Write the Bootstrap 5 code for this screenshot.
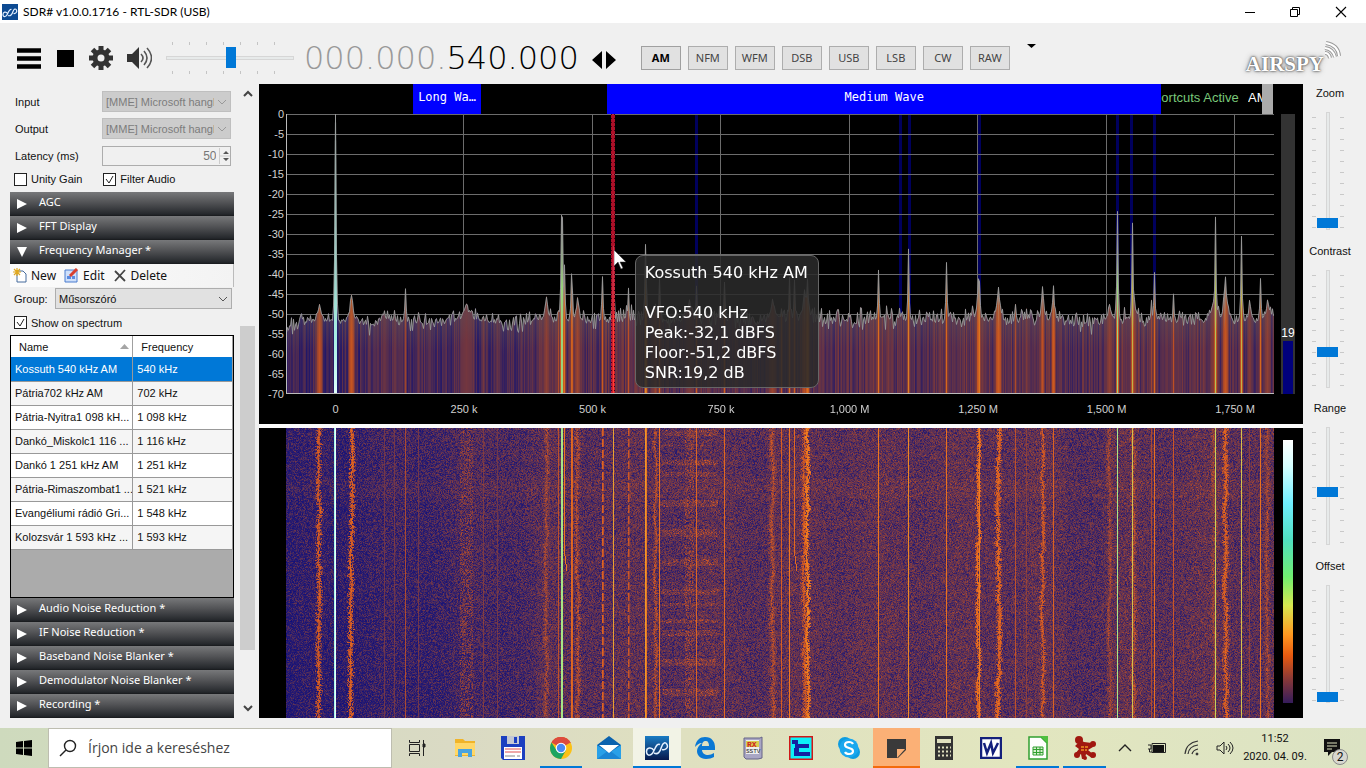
<!DOCTYPE html>
<html lang="hu">
<head>
<meta charset="utf-8">
<meta name="viewport" content="width=device-width, initial-scale=1">
<title>SDR# v1.0.0.1716 - RTL-SDR (USB)</title>
<link href="https://cdn.jsdelivr.net/npm/bootstrap@5.3.0/dist/css/bootstrap.min.css" rel="stylesheet">
<script src="https://cdn.jsdelivr.net/npm/bootstrap@5.3.0/dist/js/bootstrap.bundle.min.js"></script>
<style>
  body { font: 11px/16px "Noto Sans", "Open Sans", sans-serif; color: #111; background: #f0f0f0; height: 100vh; min-height: 640px; overflow: hidden; }
  svg { display: block; }
  button { font: inherit; color: inherit; }
  .plain-btn { border: 0; background: none; padding: 0; }
  .ui-text { font-family: "Liberation Sans", sans-serif; font-size: 11px; }

  .title-bar { height: 23px; background: #fff; padding: 0 18px 0 2px; }
  .title-text { font: 12px/16px Lato, sans-serif; color: #000; margin-left: 5px; }
  .window-btns { gap: 33px; }
  .tool-row { height: 61px; padding: 8px 24px 0 15px; }
  .tools { gap: 14px; }

  .volume { width: 128px; height: 32px; background: repeating-linear-gradient(90deg, #c4c4c4 0 1px, transparent 1px 17px) 6px 0 / 118px 3px no-repeat, repeating-linear-gradient(90deg, #c4c4c4 0 1px, transparent 1px 17px) 6px 100% / 118px 3px no-repeat; }
  .slider { appearance: none; -webkit-appearance: none; background: none; margin: 0; display: block; }
  .slider::-webkit-slider-runnable-track { height: 4px; background: #e7eaea; border: 1px solid #d6d6d6; }
  .slider::-webkit-slider-thumb { -webkit-appearance: none; width: 10px; height: 21px; margin-top: -10px; background: #0078d7; border: 0; border-radius: 0; }

  .digits { font: 200 32px/40px "DejaVu Sans Light", "DejaVu Sans", sans-serif; color: #000; white-space: nowrap; margin-left: 10px; }
  .digits .dim { color: #999; }
  .modes { gap: 7px; }
  .mode { width: 40px; height: 24px; padding: 0; border: 1px solid #adadad; border-radius: 0; background: #e1e1e1; color: #444; font: 11px/16px "Noto Sans", sans-serif; }
  .mode.active { color: #000; font-weight: 700; border-color: #a0a0a0; background: #e1e1e1; }
  .brand { font: 900 21px/24px "Liberation Serif", serif; color: #fff; text-shadow: 0 0 2px #444, 0 0 3px #777, 0 0 6px #999; }

  .left-pane { width: 259px; flex: none; }
  .left-content { width: 234px; padding-left: 10px; }
  .field-row { height: 27px; padding: 0 3px 0 5px; }
  .drop { appearance: none; border: 1px solid #adadad; border-radius: 0; height: 21px; padding: 0 16px 0 3px; color: #111; font: 11px/16px "Liberation Sans", sans-serif; background: #e1e1e1 url("data:image/svg+xml,%3Csvg xmlns='http://www.w3.org/2000/svg' width='10' height='6'%3E%3Cpath d='M1 1l4 4 4-4' fill='none' stroke='%23555'/%3E%3C/svg%3E") right 3px center no-repeat; }
  .drop:disabled { width: 129px; background-color: #ccc; border-color: #bfbfbf; color: #7c7c7c; opacity: 1; background-image: url("data:image/svg+xml,%3Csvg xmlns='http://www.w3.org/2000/svg' width='10' height='6'%3E%3Cpath d='M1 1l4 4 4-4' fill='none' stroke='%23999'/%3E%3C/svg%3E"); }
  .group-drop { width: 177px; margin-right: 2px; }
  .num-box { width: 129px; height: 20px; border: 1px solid #adadad; }
  .num-box input { min-width: 0; border: 0; background: none; text-align: right; color: #777; font: 12px/16px "Liberation Sans", sans-serif; padding: 0 2px; }
  .check-row { height: 23px; padding-bottom: 3px; }
  .tick { appearance: none; width: 13px; height: 13px; margin: 0; border: 1px solid #222; background: #fff; flex: none; }
  .tick:checked { background: #fff url("data:image/svg+xml,%3Csvg xmlns='http://www.w3.org/2000/svg' width='11' height='11'%3E%3Cpath d='M2 5l3 4 4-7' fill='none' stroke='%23222'/%3E%3C/svg%3E") center no-repeat; }
  .fold { height: 24px; width: 100%; border: 0; padding: 0 0 4px 7px; gap: 12px; color: #fff; font: 11px/16px "Noto Sans", sans-serif; background: linear-gradient(#77787a, #515255 45%, #25282c 92%, #17191c); text-align: left; }
  .fold svg { margin-top: 4px; }
  .fold-text { white-space: nowrap; }
  .freq-tools { height: 23px; background: linear-gradient(90deg, #fcfcfc, #f3f3f3); gap: 8px; border-right: 1px solid #bbb; padding-left: 3px; font-size: 12px; }
  .grid-box { border: 1px solid #000; background: #ababab; min-height: 0; overflow: hidden; }
  .grid-table { table-layout: fixed; width: 100%; font: 11px/16px "Liberation Sans", sans-serif; color: #111; border-collapse: collapse; background: #fff; margin: 0; }
  .name-col { width: 55%; }
  .grid-table th { height: 21px; font-weight: 400; padding: 0 3px 0 8px; border: solid #a0a0a0; border-width: 0 1px 0 0; }
  .grid-table td { height: 24px; padding: 0 0 0 4px; border: 1px solid #999; border-width: 0 1px 1px 0; white-space: nowrap; overflow: hidden; }
  .grid-table tr:nth-child(even) td { background: #f5f5f5; }
  .grid-table tr.picked td { background: #0078d7; color: #fff; }
  .pane-scroll { width: 15px; margin-left: 6px; }
  .pane-thumb { height: 324px; background: #cdcdcd; margin-bottom: 54px; }

  .spectrum { flex: 340 1 0; background: #000; display: grid; grid-template: 30px 1fr 30px / 27px 1fr 29px; min-height: 0; }
  .waterfall { flex: 290 1 0; background: #000; display: grid; grid-template-columns: 27px 1fr 29px; min-height: 0; }
  .spectrum canvas, .waterfall canvas { width: 100%; height: 100%; display: block; }
  .view-gap { height: 4px; background: #fafafa; }
  .band { background: #00f; color: #fff; font: 12px/27px "DejaVu Sans Mono", monospace; text-align: center; white-space: nowrap; overflow: hidden; flex: none; }
  .marquee-text { font: 13px/28px "Liberation Sans", sans-serif; color: #fff; white-space: nowrap; overflow: hidden; }
  .marquee-text .good { color: #79c879; }
  .marquee-clip { width: 14px; overflow: hidden; }
  .marquee-cap { width: 11px; background: #ababab; flex: none; margin-right: 1px; }
  .axis { font: 11px/14px "Liberation Sans", sans-serif; color: #d0d0d0; }
  .axis-y { margin: -7px 2px -7px 0; text-align: right; z-index: 1; }
  .axis-x span { position: absolute; top: 8px; transform: translateX(-50%); white-space: nowrap; }
  .meter { width: 14px; margin-left: 7px; background: #333; color: #fff; font: 12px/16px "Liberation Sans", sans-serif; }
  .meter-bar { width: 10px; height: 19%; background: #00007c; }
  .hint { position: absolute; left: 35.3%; top: 50.2%; width: 184px; height: 133px; padding: 7px 9px; border: 1px solid #666; border-radius: 8px; background: rgba(42,42,42,.87); color: #fff; font: 16px/20px "DejaVu Sans", sans-serif; white-space: nowrap; }
  .pointer { position: absolute; left: 33.2%; top: 48.5%; }
  .scale-bar { width: 10px; margin: 12px 0 15px 9px; background: linear-gradient(#fff, #d5ffff 10%, #70efff 24%, #50dfc0 38%, #70ef70 52%, #d8e850 63%, #ff9820 74%, #e85a10 82%, #883838 91%, #351c5c); }

  .right-pane { width: 63px; padding: 0 9px 4px 0; flex: none; }
  .side-ctl { flex: 1 1 0; min-height: 0; }
  .side-label { height: 28px; padding-top: 1px; white-space: nowrap; }
  .side-slider { width: 32px; height: 118px; margin-right: 4px; background: repeating-linear-gradient(#c9c9c9 0 1px, transparent 1px 11px) 0 5px / 4px 111px no-repeat, repeating-linear-gradient(#c9c9c9 0 1px, transparent 1px 11px) 100% 5px / 4px 111px no-repeat; }
  .side-slider .slider { width: 118px; height: 24px; flex: none; transform: rotate(-90deg); }

  .task-bar { height: 40px; margin-top: 10px; background: linear-gradient(90deg, #cedabd, #dadac4 33%, #dfe0c0 50%, #e2e6bf 75%, #dce3c4); }
  .start { width: 48px; }
  .search { width: 344px; margin-right: 1px; background: #fff; border: 1px solid #bdbdb0; padding-left: 10px; gap: 11px; }
  .search input { border: 0; outline: 0; min-width: 0; font: 14px/20px "Open Sans", sans-serif; color: #444; padding: 0; }
  .search input::placeholder { color: #444; opacity: 1; }
  .task { width: 48px; border-bottom: 2px solid transparent; padding-top: 2px; flex: none; }
  .task.slim { width: 47px; }
  .task.on { border-image: linear-gradient(90deg, transparent 9%, #0078d7 9% 91%, transparent 91%) 2; border-width: 0 0 2px; }
  .task.front { background: #f2f3e6; border-color: #0078d7; }
  .task.alert-on { background: #fbb076; border-color: #f36a0c; }
  .clock { width: 66px; text-align: center; font: 11px/18px Roboto, sans-serif; color: #111; }
  .count { position: absolute; left: 8px; top: 10px; width: 16px; height: 16px; border-radius: 50%; background: #d8d8d0; border: 1px solid #888; font: 12px/14px Roboto, sans-serif; text-align: center; }
</style>
</head>
<body class="d-flex flex-column">

<header class="title-bar d-flex align-items-center">
  <svg width="16" height="16" viewBox="0 0 16 16"><rect width="16" height="16" fill="#0d4a92"/><path d="M1 10.500c0 3 3 3 4.500-.5S8 5 9.500 5.500M6 11.500c2.500 1 4-1 5-4s2.500-3 3.500-1.500c1 2-1 4-3 3.500M1 10.500c0-2.500 3-3.500 4.500-1" fill="none" stroke="#e4f0ff" stroke-width="1.200"/></svg>
  <span class="title-text me-auto">SDR# v1.0.0.1716 - RTL-SDR (USB)</span>
  <div class="window-btns d-flex align-items-center">
    <button class="plain-btn" aria-label="Minimize"><svg width="12" height="12"><path d="M1 6.500h10" stroke="#000"/></svg></button>
    <button class="plain-btn" aria-label="Restore"><svg width="12" height="12" fill="none" stroke="#000"><path d="M1.500 3.500h7v7h-7zM3.500 3.500v-2h7v7h-2"/></svg></button>
    <button class="plain-btn" aria-label="Close"><svg width="14" height="14"><path d="M2 2l10 10M12 2L2 12" stroke="#000" stroke-width="1.100"/></svg></button>
  </div>
</header>

<div class="tool-row d-flex align-items-center">
  <div class="tools d-flex align-items-center">
    <button class="plain-btn" aria-label="Menu"><svg width="27" height="22"><path d="M2 3.500h24M2 11.500h24M2 19.500h24" stroke="#000" stroke-width="4.500"/></svg></button>
    <button class="plain-btn" aria-label="Stop"><svg width="19" height="18"><rect x="1" y="1" width="17" height="17"/></svg></button>
    <button class="plain-btn" aria-label="Settings"><svg width="24" height="24" viewBox="-12 -12 24 24"><g fill="#333"><path d="M-2.500-12h5v24h-5z"/><path d="M-2.500-12h5v24h-5z" transform="rotate(45)"/><path d="M-2.500-12h5v24h-5z" transform="rotate(90)"/><path d="M-2.500-12h5v24h-5z" transform="rotate(135)"/><circle r="8.500"/></g><circle r="3.500" fill="#f0f0f0"/></svg></button>
    <button class="plain-btn" aria-label="Mute"><svg width="25" height="24" viewBox="1 0 25 24"><path d="M0 8h6l7-7v22l-7-7H0z" fill="#333"/><path d="M15 8q4 4 0 8M18 5q6 7 0 14M21 2q9 10 0 20" fill="none" stroke="#555" stroke-width="1.600"/></svg></button>
    <div class="volume d-flex align-items-center"><input type="range" class="slider w-100" value="51" aria-label="Volume"></div>
  </div>
  <div class="digits"><span class="dim">000.000.</span>540.000</div>
  <button class="plain-btn ms-2 ps-1 mt-1" aria-label="Tuning style"><svg width="26" height="18"><path d="M11 0v18L1 9zM15 0v18l10-9z"/></svg></button>
  <div class="modes d-flex ms-4">
    <button class="mode active">AM</button><button class="mode">NFM</button><button class="mode">WFM</button><button class="mode">DSB</button><button class="mode">USB</button><button class="mode">LSB</button><button class="mode">CW</button><button class="mode">RAW</button>
  </div>
  <button class="plain-btn ms-3 mb-4" aria-label="More"><svg width="12" height="6"><path d="M1 1h9L5.500 5z"/></svg></button>
  <div class="brand ms-auto d-flex align-items-end"><span>AIRSPY</span><svg class="mb-3" width="18" height="20" viewBox="0 0 18 20" fill="none"><g stroke="#999" stroke-width="4"><path d="M1 13q4 0 5 5M1 8q8 1 10 9M2 3q12 2 13 13"/></g><g stroke="#fff" stroke-width="2"><path d="M1 13q4 0 5 5M1 8q8 1 10 9M2 3q12 2 13 13"/></g></svg></div>
</div>

<main class="d-flex flex-grow-1" style="min-height:0">
  <aside class="left-pane d-flex">
    <div class="left-content d-flex flex-column pt-1">
      <div class="field-row d-flex align-items-center justify-content-between ui-text"><label for="inp">Input</label><select id="inp" class="drop" disabled><option>[MME] Microsoft hangl</option></select></div>
      <div class="field-row d-flex align-items-center justify-content-between ui-text"><label for="outp">Output</label><select id="outp" class="drop" disabled><option>[MME] Microsoft hangl</option></select></div>
      <div class="field-row d-flex align-items-center justify-content-between ui-text"><label for="lat">Latency (ms)</label>
        <div class="num-box d-flex align-items-center"><input id="lat" class="flex-grow-1" value="50" disabled><svg width="16" height="18"><path d="M1.500 1v16M1 9h14" stroke="#ccc"/><path d="M5 7l3-3 3 3zM5 11l3 3 3-3z" fill="#555"/></svg></div></div>
      <div class="check-row d-flex align-items-center ui-text"><div class="d-flex align-items-center gap-1 col-5 ps-1"><input type="checkbox" class="tick" id="ug"><label for="ug">Unity Gain</label></div><div class="d-flex align-items-center gap-1"><input type="checkbox" class="tick" id="fa" checked><label for="fa">Filter Audio</label></div></div>
      <button class="fold d-flex align-items-center"><svg width="10" height="10"><path d="M0 0v10l10-5z" fill="#fff"/></svg><span class="fold-text">AGC</span></button>
      <button class="fold d-flex align-items-center"><svg width="10" height="10"><path d="M0 0v10l10-5z" fill="#fff"/></svg><span class="fold-text">FFT Display</span></button>
      <button class="fold d-flex align-items-center"><svg width="10" height="10"><path d="M0 0h10L5 10z" fill="#fff"/></svg><span class="fold-text">Frequency Manager *</span></button>
      <div class="freq-tools d-flex align-items-center">
        <button class="plain-btn d-flex align-items-center gap-1"><svg width="14" height="15" viewBox="0 0 14 15"><path d="M4 3h6l3 3v8H4z" fill="#fff" stroke="#456a9c"/><path d="M4 0v8M0 4h8M1 1l6 6M7 1L1 7" stroke="#e0a820" stroke-width="1.200"/></svg>New</button>
        <button class="plain-btn d-flex align-items-center gap-1"><svg width="15" height="15" viewBox="0 0 15 15"><path d="M1 2h12v12H1z" fill="#cfe0fa" stroke="#4b7ccf"/><path d="M3 8h4v3H3zM8 8h3v3H8z" fill="#5a8ae0"/><path d="M6 8l7-7" stroke="#d84030" stroke-width="3"/></svg>Edit</button>
        <button class="plain-btn d-flex align-items-center gap-1"><svg width="14" height="14"><path d="M2 2l10 10M12 1L2 12" stroke="#444" stroke-width="1.800"/></svg>Delete</button>
      </div>
      <div class="d-flex align-items-center ui-text ps-1" style="height:23px"><label for="grp" class="me-auto">Group:</label><select id="grp" class="drop group-drop"><option>Műsorszóró</option></select></div>
      <div class="d-flex align-items-center gap-1 ui-text ps-1" style="height:25px"><input type="checkbox" class="tick" id="sos" checked><label for="sos">Show on spectrum</label></div>
      <div class="grid-box flex-grow-1">
        <table class="grid-table">
          <colgroup><col class="name-col"><col></colgroup>
          <thead><tr><th><span class="d-flex justify-content-between align-items-center">Name<svg width="9" height="6"><path d="M0 5h9L4.500 0z" fill="#a5a5a5"/></svg></span></th><th>Frequency</th></tr></thead>
          <tbody>
            <tr class="picked"><td>Kossuth 540 kHz AM</td><td>540 kHz</td></tr>
            <tr><td>Pátria702 kHz AM</td><td>702 kHz</td></tr>
            <tr><td>Pátria-Nyitra1 098 kH...</td><td>1 098 kHz</td></tr>
            <tr><td>Dankó_Miskolc1 116 ...</td><td>1 116 kHz</td></tr>
            <tr><td>Dankó 1 251 kHz AM</td><td>1 251 kHz</td></tr>
            <tr><td>Pátria-Rimaszombat1 ...</td><td>1 521 kHz</td></tr>
            <tr><td>Evangéliumi rádió Gri...</td><td>1 548 kHz</td></tr>
            <tr><td>Kolozsvár 1 593 kHz ...</td><td>1 593 kHz</td></tr>
          </tbody>
        </table>
      </div>
      <button class="fold d-flex align-items-center"><svg width="10" height="10"><path d="M0 0v10l10-5z" fill="#fff"/></svg><span class="fold-text">Audio Noise Reduction *</span></button>
      <button class="fold d-flex align-items-center"><svg width="10" height="10"><path d="M0 0v10l10-5z" fill="#fff"/></svg><span class="fold-text">IF Noise Reduction *</span></button>
      <button class="fold d-flex align-items-center"><svg width="10" height="10"><path d="M0 0v10l10-5z" fill="#fff"/></svg><span class="fold-text">Baseband Noise Blanker *</span></button>
      <button class="fold d-flex align-items-center"><svg width="10" height="10"><path d="M0 0v10l10-5z" fill="#fff"/></svg><span class="fold-text">Demodulator Noise Blanker *</span></button>
      <button class="fold d-flex align-items-center"><svg width="10" height="10"><path d="M0 0v10l10-5z" fill="#fff"/></svg><span class="fold-text">Recording *</span></button>
    </div>
    <div class="pane-scroll d-flex flex-column align-items-stretch justify-content-end">
      <svg class="mb-auto mt-1 mx-auto" width="10" height="10"><path d="M1 8l4-4 4 4" fill="none" stroke="#444" stroke-width="2"/></svg>
      <div class="pane-thumb"></div>
      <svg class="mx-auto mb-1" width="10" height="10"><path d="M1 2l4 4 4-4" fill="none" stroke="#444" stroke-width="2"/></svg>
    </div>
  </aside>

  <section class="d-flex flex-column flex-grow-1" style="min-width:0">
    <div class="spectrum">
      <div></div>
      <div class="d-flex" style="min-width:0">
        <div class="band" style="width:6.900%;margin-left:12.850%">Long Wa…</div>
        <div class="band" style="width:56.100%;margin-left:12.750%">Medium Wave</div>
        <div class="marquee-text flex-grow-1 d-flex justify-content-between"><span class="good">ortcuts Active</span><span class="marquee-clip">AM</span></div>
        <div class="marquee-cap"></div>
      </div>
      <div></div>
      <div class="axis axis-y d-flex flex-column justify-content-between" id="levels"></div>
      <div class="position-relative" style="min-height:0">
        <canvas id="fft" width="988" height="280" class="position-absolute"></canvas>
        <div class="hint">Kossuth 540 kHz AM<br><br>VFO:540 kHz<br>Peak:-32,1 dBFS<br>Floor:-51,2 dBFS<br>SNR:19,2 dB</div>
        <svg class="pointer" width="12" height="20" viewBox="0 0 12 20"><path d="M0 0v16l4-4 3 7 2-1-3-6h6z" fill="#fff" stroke="#333" stroke-width=".5"/></svg>
      </div>
      <div class="meter d-flex flex-column align-items-center justify-content-end">19<div class="meter-bar"></div></div>
      <div></div>
      <div class="axis axis-x position-relative" id="freqs"></div>
    </div>
    <div class="view-gap"></div>
    <div class="waterfall">
      <div></div>
      <div class="position-relative"><canvas id="fall" width="988" height="290" class="position-absolute"></canvas></div>
      <div class="scale-bar"></div>
    </div>
  </section>

  <aside class="right-pane d-flex flex-column ui-text">
    <div class="side-ctl d-flex flex-column align-items-center"><label class="side-label" for="s1">Zoom</label><div class="side-slider d-flex justify-content-center align-items-center"><input type="range" id="s1" class="slider" value="1"></div></div>
    <div class="side-ctl d-flex flex-column align-items-center"><label class="side-label" for="s2">Contrast</label><div class="side-slider d-flex justify-content-center align-items-center"><input type="range" id="s2" class="slider" value="28"></div></div>
    <div class="side-ctl d-flex flex-column align-items-center"><label class="side-label" for="s3">Range</label><div class="side-slider d-flex justify-content-center align-items-center"><input type="range" id="s3" class="slider" value="44"></div></div>
    <div class="side-ctl d-flex flex-column align-items-center"><label class="side-label" for="s4">Offset</label><div class="side-slider d-flex justify-content-center align-items-center"><input type="range" id="s4" class="slider" value="0"></div></div>
  </aside>
</main>

<footer class="task-bar d-flex align-items-stretch">
  <button class="plain-btn start d-flex align-items-center justify-content-center" aria-label="Start"><svg width="16" height="16"><path d="M0 2l7-1v6.500H0zM8 1l8-1v7.500H8zM0 8.500h7V15l-7-1zM8 8.500h8V16l-8-1z"/></svg></button>
  <div class="search d-flex align-items-center"><svg width="18" height="18" viewBox="0 0 18 18"><circle cx="11" cy="7" r="5.500" fill="none" stroke="#222" stroke-width="1.400"/><path d="M7 11l-6 6" stroke="#222" stroke-width="1.400"/></svg><input class="flex-grow-1" type="text" placeholder="Írjon ide a kereséshez" aria-label="Keresés"></div>
  <button class="plain-btn task d-flex align-items-center justify-content-center" aria-label="Task view"><svg width="18" height="16" viewBox="0 0 18 16" fill="none" stroke="#222"><path d="M1.500 4.500h10v7h-10zM1.500 0v2.500h10V0M1.500 16v-2.500h10V16M15.500 0v16"/><path d="M15 4h2v3h-2z" fill="#222"/></svg></button>
  <button class="plain-btn task d-flex align-items-center justify-content-center" aria-label="Explorer"><svg width="22" height="20" viewBox="0 0 22 20"><path d="M1 1h8l2 2h10v15H1z" fill="#f0b429"/><path d="M1 5h20v12H1z" fill="#ffd766"/><path d="M4 19v-8h14v8h-4v-4H8v4z" fill="#4aa3df"/></svg></button>
  <button class="plain-btn task d-flex align-items-center justify-content-center" aria-label="Commander"><svg width="24" height="24" viewBox="0 0 24 24"><path d="M0 0h24v24H2l-2-2z" fill="#1c3fc0"/><path d="M6 0h12v8H6z" fill="#c4c8d4"/><path d="M13 1h3v6h-3z" fill="#1c3fc0"/><path d="M3 11h18v12H3z" fill="#fff"/><path d="M4 13h16M4 16h16" stroke="#e05050"/><path d="M4 20h10M16 20h3" stroke="#888"/></svg></button>
  <button class="plain-btn task on d-flex align-items-center justify-content-center" aria-label="Chrome"><svg width="24" height="24" viewBox="-12 -12 24 24"><circle r="11" fill="#fbc116"/><path d="M0 0L-9.500-5.500A11 11 0 0 1 9.500-5.500z" fill="#dd4b3e"/><path d="M-9.500-5.500A11 11 0 0 0 0 11L5 2-4 3z" fill="#1da462"/><path d="M-9.500-5.500L0-5h9.800A11 11 0 0 0-9.500-5.500z" fill="#dd4b3e"/><circle r="5.300" fill="#fff"/><circle r="4.200" fill="#4a8af4"/></svg></button>
  <button class="plain-btn task d-flex align-items-center justify-content-center" aria-label="Mail"><svg width="24" height="24" viewBox="0 0 24 24"><path d="M0 9L12 0l12 9v14H0z" fill="#0a62ae"/><path d="M0 9l12 8 12-8v14H0z" fill="#28a0e8"/><path d="M0 23l12-9 12 9z" fill="#1a86d4"/><path d="M2 9h20l-10 8z" fill="#fff"/></svg></button>
  <button class="plain-btn task front d-flex align-items-center justify-content-center" aria-label="SDR#"><svg width="24" height="24" viewBox="0 0 24 24"><defs><linearGradient id="sg" x2="0" y2="1"><stop stop-color="#1a7cc4"/><stop offset="1" stop-color="#06184c"/></linearGradient></defs><path d="M0 0h24v24H0z" fill="url(#sg)"/><path d="M1.500 15.500c0 5 5 5 7.500-1s4-7 6-6M9 17c4 2 6-1 7.500-6s4-5 5.500-2.500c1.500 3-1.500 6-5 5M1.500 15.500c0-4 5-5 7.500-1" fill="none" stroke="#e4f0ff" stroke-width="1.500"/></svg></button>
  <button class="plain-btn task d-flex align-items-center justify-content-center" aria-label="Edge"><svg width="22" height="22" viewBox="0 0 22 22"><path d="M1 10C2 3 6 0 11 0c7 0 10 5 10 10v3H8c0 3 3 5 6 5 2 0 4-1 6-2v4c-2 1-5 2-8 2-6 0-9-4-9-8 0-3 2-6 5-8-3 0-5 2-7 4zm7-1h7c0-3-1-5-3-5-3 0-4 2-4 5z" fill="#0a78d4"/></svg></button>
  <button class="plain-btn task d-flex align-items-center justify-content-center" aria-label="RX SSTV"><svg width="22" height="24" viewBox="0 0 22 24"><path d="M2 2h16l2-1v21l-4 1H4l-2-2z" fill="#a9a6c4" stroke="#666488"/><path d="M4 4h13v14H4z" fill="#eee"/><path d="M4 5h13v6H4z" fill="#d8d050"/><g font-family="Liberation Mono, monospace" font-weight="700" font-size="8"><text x="5" y="11" fill="#d02020">RX</text></g><g font-family="Liberation Mono, monospace" font-size="6"><text x="4" y="17" fill="#222">SSTV</text></g></svg></button>
  <button class="plain-btn task d-flex align-items-center justify-content-center" aria-label="TT"><svg width="24" height="24" viewBox="0 0 24 24"><path d="M.5.500h23v23H.5z" fill="#0cf0f8" stroke="#d01818" stroke-width="2"/><path d="M3 4h6v4h11v4H10v4h11v4H5v-8h1V8H3z" fill="#1420a0"/></svg></button>
  <button class="plain-btn task d-flex align-items-center justify-content-center" aria-label="Skype"><svg width="22" height="22" viewBox="0 0 22 22"><circle cx="7" cy="7" r="7" fill="#0e9ce0"/><circle cx="15" cy="15" r="7" fill="#0e9ce0"/><circle cx="11" cy="11" r="9.500" fill="#1aa8ee"/><path d="M15 7q-1-2-4-2-4 0-4 3 0 2 4 3t4 3q0 3-4 3-3 0-4-2" fill="none" stroke="#fff" stroke-width="2.200"/></svg></button>
  <button class="plain-btn task alert-on slim d-flex align-items-center justify-content-center" aria-label="Sticky notes"><svg width="19" height="19"><path d="M0 0h19v11l-8 8H0z" fill="#3a3a3a"/><path d="M10 10h8l-8 9z" fill="#fbb076"/></svg></button>
  <button class="plain-btn task slim d-flex align-items-center justify-content-center" aria-label="Calculator"><svg width="18" height="24"><path d="M0 0h18v24H0z" fill="#333"/><path d="M2 3h14v4H2z" fill="#dfe0c0"/><path d="M3 11.500h13M3 15.500h13M3 19.500h13" stroke="#dfe0c0" stroke-width="2" stroke-dasharray="2"/></svg></button>
  <button class="plain-btn task slim d-flex align-items-center justify-content-center" aria-label="Word"><svg width="22" height="22"><path d="M1 1h20v20H1z" fill="#fff" stroke="#14207c" stroke-width="2.500"/><path d="M4 6l3 10 4-10 2 10 5-10" fill="none" stroke="#14207c" stroke-width="2.500"/></svg></button>
  <button class="plain-btn task on slim d-flex align-items-center justify-content-center" aria-label="Calc"><svg width="20" height="24"><path d="M1 1h12l6 6v16H1z" fill="#fff" stroke="#30a030" stroke-width="1.500"/><path d="M12 0h8v8z" fill="#50c040"/><path d="M5 11h10v8H5zM5 13.500h10M5 16.500h10M8.500 11v8M12 11v8" fill="#d8f0d0" stroke="#30a030"/></svg></button>
  <button class="plain-btn task on slim d-flex align-items-center justify-content-center" aria-label="Soft66"><svg width="24" height="24" viewBox="0 0 24 24"><g fill="#a01810"><circle cx="6" cy="4" r="4"/><circle cx="20" cy="8" r="3"/><circle cx="4" cy="19" r="3"/><circle cx="12" cy="22" r="2"/><circle cx="20" cy="19" r="3"/><path d="M3 2l8 4 8 1 1 4-5 3 6 5-2 3-6-4-1 5h-3l-1-5-4 3-2-3 4-5-4-3 3-3z"/></g><path d="M8 11h7M8 14h6" stroke="#f09020" stroke-width="1.500" stroke-dasharray="3 1"/></svg></button>
  <div class="d-flex align-items-center ms-auto">
    <svg width="14" height="10"><path d="M1 8l6-6 6 6" fill="none" stroke="#222" stroke-width="1.400"/></svg>
    <svg class="ms-3" width="20" height="12"><path d="M5 3h11v7H5z" fill="#111"/><path d="M4 1.500h13.500v9H4zM0 3h3v4H0M1.500 7v3H4" fill="none" stroke="#222"/></svg>
    <svg class="ms-3" width="16" height="16" fill="none" stroke="#333"><path d="M1 14Q2 3 14 1M4 14Q5 6 14 5M8 14q1-4 6-5" stroke-width="1.200"/><circle cx="13" cy="14" r="1" fill="#222"/></svg>
    <svg class="ms-3" width="18" height="16" fill="none" stroke="#222"><path d="M1 6h3l4-4v12l-4-4H1zM10 6q2 2 0 4M12 4q4 4 0 8M14 2q6 6 0 12"/></svg>
    <div class="clock ms-2">11:52<br>2020. 04. 09.</div>
    <div class="position-relative ms-3 me-4"><svg width="18" height="18"><path d="M0 0h16v13H8l-4 4v-4H0z" fill="#111"/><path d="M3 4h10M3 7h10M3 10h5" stroke="#e0e4c0"/></svg><span class="count">2</span></div>
  </div>
</footer>

<script>
const W = 988, H = 280, FH = 290, PER250 = 128.5, ZERO = 49.5;
let seed = 77;
const rnd = () => { seed = (seed * 1664525 + 1013904223) >>> 0; return seed / 4294967296; };
const noise = () => rnd() + rnd() - 1;

/* level (dBFS) to colour */
const stops = [[-60,14,14,125],[-55,38,26,112],[-51,90,48,86],[-47,136,62,62],[-43,205,86,38],[-38,238,118,30],[-32,230,170,55],[-25,180,225,110],[-15,130,240,205],[-5,190,255,250],[0,255,255,255]];
function tint(db) {
  if (db <= -60) return stops[0].slice(1);
  for (let i = 1; i < stops.length; i++) if (db <= stops[i][0]) {
    const a = stops[i-1], b = stops[i], t = (db - a[0]) / (b[0] - a[0]);
    return [1,2,3].map(k => a[k] + (b[k] - a[k]) * t);
  }
  return [255,255,255];
}
/* carriers: x, spectrum level, width, waterfall level, waterfall kind */
const peaks = [
 [33,-47,3,-43,'wob'],[49,0,1,-4,'line'],[65,-45,3,-42,'wob'],[98,-49,2,-49,'line'],[108,-49,1,-49,'faint'],[119,-43,1,-45,'line'],[132,-50,1,-49,'faint'],
 [180,-47,6,-48,'fuzz'],[197,-51,1,-48,'faint'],[211,-51,1,-49,'faint'],[260,-46,3,-46,'wob'],[272,-49,1,-44,'line'],[275,-24.5,1,-22,'line'],[276,-25,1,-23,'line'],[278,-37,1,-38,'short'],[285,-40,1,-40,'line'],[286,-44,1,-41,'line'],[291,-46,3,-45,'wob'],
 [316,-40,1,-41,'dash'],[327,-33,1,-33,'line'],[342,-43,1,-43,'dash'],[359,-31,1,-34,'line'],[360,-42,1,-38,'line'],[369,-47,2,-45,'wob'],[373,-40,1,-39,'line'],[403,-46,4,-47,'fuzz'],[410,-43,1,-41,'line'],[438,-42,1,-40,'line'],
 [486,-46,4,-45,'wob'],[495,-49,1,-42,'line'],[503,-40,1,-38,'line'],[508,-41,1,-40,'short'],[518,-43,3,-43,'wob'],[521,-41,2,-38,'wob'],
 [592,-39,1,-38,'line'],[622,-33,1,-36,'line'],[660,-37,1,-39,'line'],[692,-40,2,-40,'wob'],[693,-42,1,-37,'line'],[712,-43,3,-41,'wob'],[729,-47,1,-44,'line'],[740,-49,1,-47,'faint'],
 [756,-42,2,-43,'wob'],[767,-43,2,-41,'line'],[823,-47,3,-46,'wob'],[831,-23,1,-22,'line'],[846,-26,1,-29,'line'],[847,-44,3,-45,'wob'],[865,-46,1,-45,'line'],[868,-39,1,-39,'line'],[887,-45,1,-43,'line'],
 [929,-25,1,-27,'line'],[928,-44,4,-46,'wob'],[939,-41,3,-42,'wob'],[955,-30,1,-29,'line'],[963,-46,2,-47,'faint'],[974,-40,1,-39,'line'],[981,-46,3,-46,'wob']];
const base = x => -53 + 2 * Math.min(1, x / 300) - (x > 780 && x < 823 ? .6 : 0) + Math.sin(x / 13) * .4;

/* spectrum */
const c = document.getElementById('fft').getContext('2d');
const lvl = [], col = [];
for (let x = 0; x < W; x++) {
  let d = base(x) + noise() * 3.200, k = base(x) + noise() * 3.500 + (x > 250 ? .8 : 0);
  for (const p of peaks) {
    const dx = Math.abs(x - p[0]);
    if (dx < p[2] * 5) {
      const f = Math.max(Math.exp(-dx / p[2] * 1.100) - .03, 0);
      d = Math.max(d, -52 + (p[1] + 52) * f + noise());
      if (dx < p[2] + 1) k = Math.max(k, -51 + (p[3] + 51) * (dx < p[2] ? 1 - dx / p[2] * .4 : .35));
    }
  }
  if (Math.abs(x - 49) < 2) k = -7;
  lvl.push(d); col.push(k);
}
c.fillStyle = '#000'; c.fillRect(0, 0, W, H);
for (const kHz of [702,1098,1116,1251,1521,1548,1593]) { c.fillStyle = '#00005c'; c.fillRect(Math.round(ZERO + kHz / 250 * PER250) - 1, 0, 3, H); }
c.fillStyle = '#6c6c6c';
for (let i = 0; i < 15; i++) c.fillRect(0, i * 20, W, 1);
for (let i = 0; i < 8; i++) c.fillRect(Math.round(ZERO + i * PER250 - .6), 0, 1, H);
for (let x = 0; x < W; x++) {
  const y = -lvl[x] * 4, rgb = tint(col[x]).map(v => Math.round(v * .92));
  const g = c.createLinearGradient(0, y, 0, H);
  g.addColorStop(0, y < 180 ? '#8d8d8d' : `rgb(${rgb.map(v => Math.round(v * .7 + 28))})`);
  g.addColorStop(.4, `rgb(${rgb})`); g.addColorStop(1, `rgb(${rgb})`);
  c.fillStyle = g; c.fillRect(x, y, 1, H - y);
}
c.strokeStyle = '#969696'; c.lineWidth = 1; c.beginPath();
for (let x = 0; x < W; x++) c.lineTo(x + .5, -lvl[x] * 4 + .5);
c.stroke();
/* carrier at zero: two-pixel bright column widening downwards */
const z = c.createLinearGradient(0, 0, 0, H);
z.addColorStop(0, '#999'); z.addColorStop(.45, '#9ac4bc'); z.addColorStop(.8, '#a8f0e4'); z.addColorStop(1, '#e0fffa');
c.fillStyle = z; c.beginPath(); c.moveTo(49, 0); c.lineTo(50, 0); c.lineTo(51, H); c.lineTo(48, H); c.fill();
c.fillStyle = 'rgba(215,20,50,.8)'; c.fillRect(325, 0, 4, H);
c.fillStyle = '#400010'; for (let y = 0; y < H; y += 4) { c.fillRect(325, y, 1, 1); c.fillRect(328, y, 1, 1); }
c.fillStyle = '#ff4030'; c.fillRect(327, 200, 1, 80);
c.fillStyle = '#bbb'; c.fillRect(0, 0, 1, H); c.fillRect(0, H - 1, W, 1);

/* waterfall */
const f = document.getElementById('fall').getContext('2d'), img = f.createImageData(W, FH);
const wob = peaks.map(() => 0);
for (let y = 0; y < FH; y++) {
  const row = new Float32Array(W), stripe = Math.sin(y / 2.300) + Math.sin(y / 5.100) > .7 ? 4.500 : 0;
  for (let x = 0; x < W; x++) {
    const left = x < 250 ? -1.300 * (1 - x / 250) - (y / FH) * 1 : 0;
    row[x] = base(x) + left + noise() * 5.500 + (y > 50 && y < 70 ? .7 : 0) + (x > 375 && x < 432 ? stripe * rnd() : 0) + (x > 480 ? .3 : 0);
  }
  peaks.forEach((p, i) => {
    const [px, , w, l, kind] = p;
    if (kind === 'line') row[px] = l + noise();
    if (kind === 'faint') row[px] = Math.max(row[px], l + noise() * 2);
    if (kind === 'dash' && y % 11 < 8) { row[px] = l + noise() * 2; row[px+1] = l - 3; }
    if (kind === 'short' && y < 143) row[px + (y > 120 ? Math.floor((y - 120) / 8) : 0)] = l;
    if (kind === 'wob') {
      wob[i] = Math.max(-1.200, Math.min(1.200, wob[i] + noise() * .8));
      for (let j = -w; j <= w; j++) { const q = Math.round(px + wob[i] + j); if (q >= 0 && q < W && rnd() > Math.abs(j) / (w + 1)) row[q] = Math.max(row[q], l - Math.abs(j) + noise() * 4); }
    }
    if (kind === 'fuzz') for (let j = -w; j <= w; j++) if (rnd() > .7) row[px + j] = l + 1 + noise() * 3;
  });
  row[48] = -9; row[49] = -2;
  for (let x = 0; x < W; x++) { const t = tint(row[x]), o = (y * W + x) * 4; img.data[o] = t[0]; img.data[o+1] = t[1]; img.data[o+2] = t[2]; img.data[o+3] = 255; }
}
f.putImageData(img, 0, 0);

/* axis labels */
const lev = document.getElementById('levels');
for (let d = 0; d >= -70; d -= 5) { const s = document.createElement('span'); s.textContent = d; lev.append(s); }
['0','250 k','500 k','750 k','1,000 M','1,250 M','1,500 M','1,750 M'].forEach((t, i) => {
  const s = document.createElement('span'); s.textContent = t; s.style.left = ((ZERO + i * PER250) / W * 100) + '%';
  document.getElementById('freqs').append(s);
});
</script>
</body>
</html>
